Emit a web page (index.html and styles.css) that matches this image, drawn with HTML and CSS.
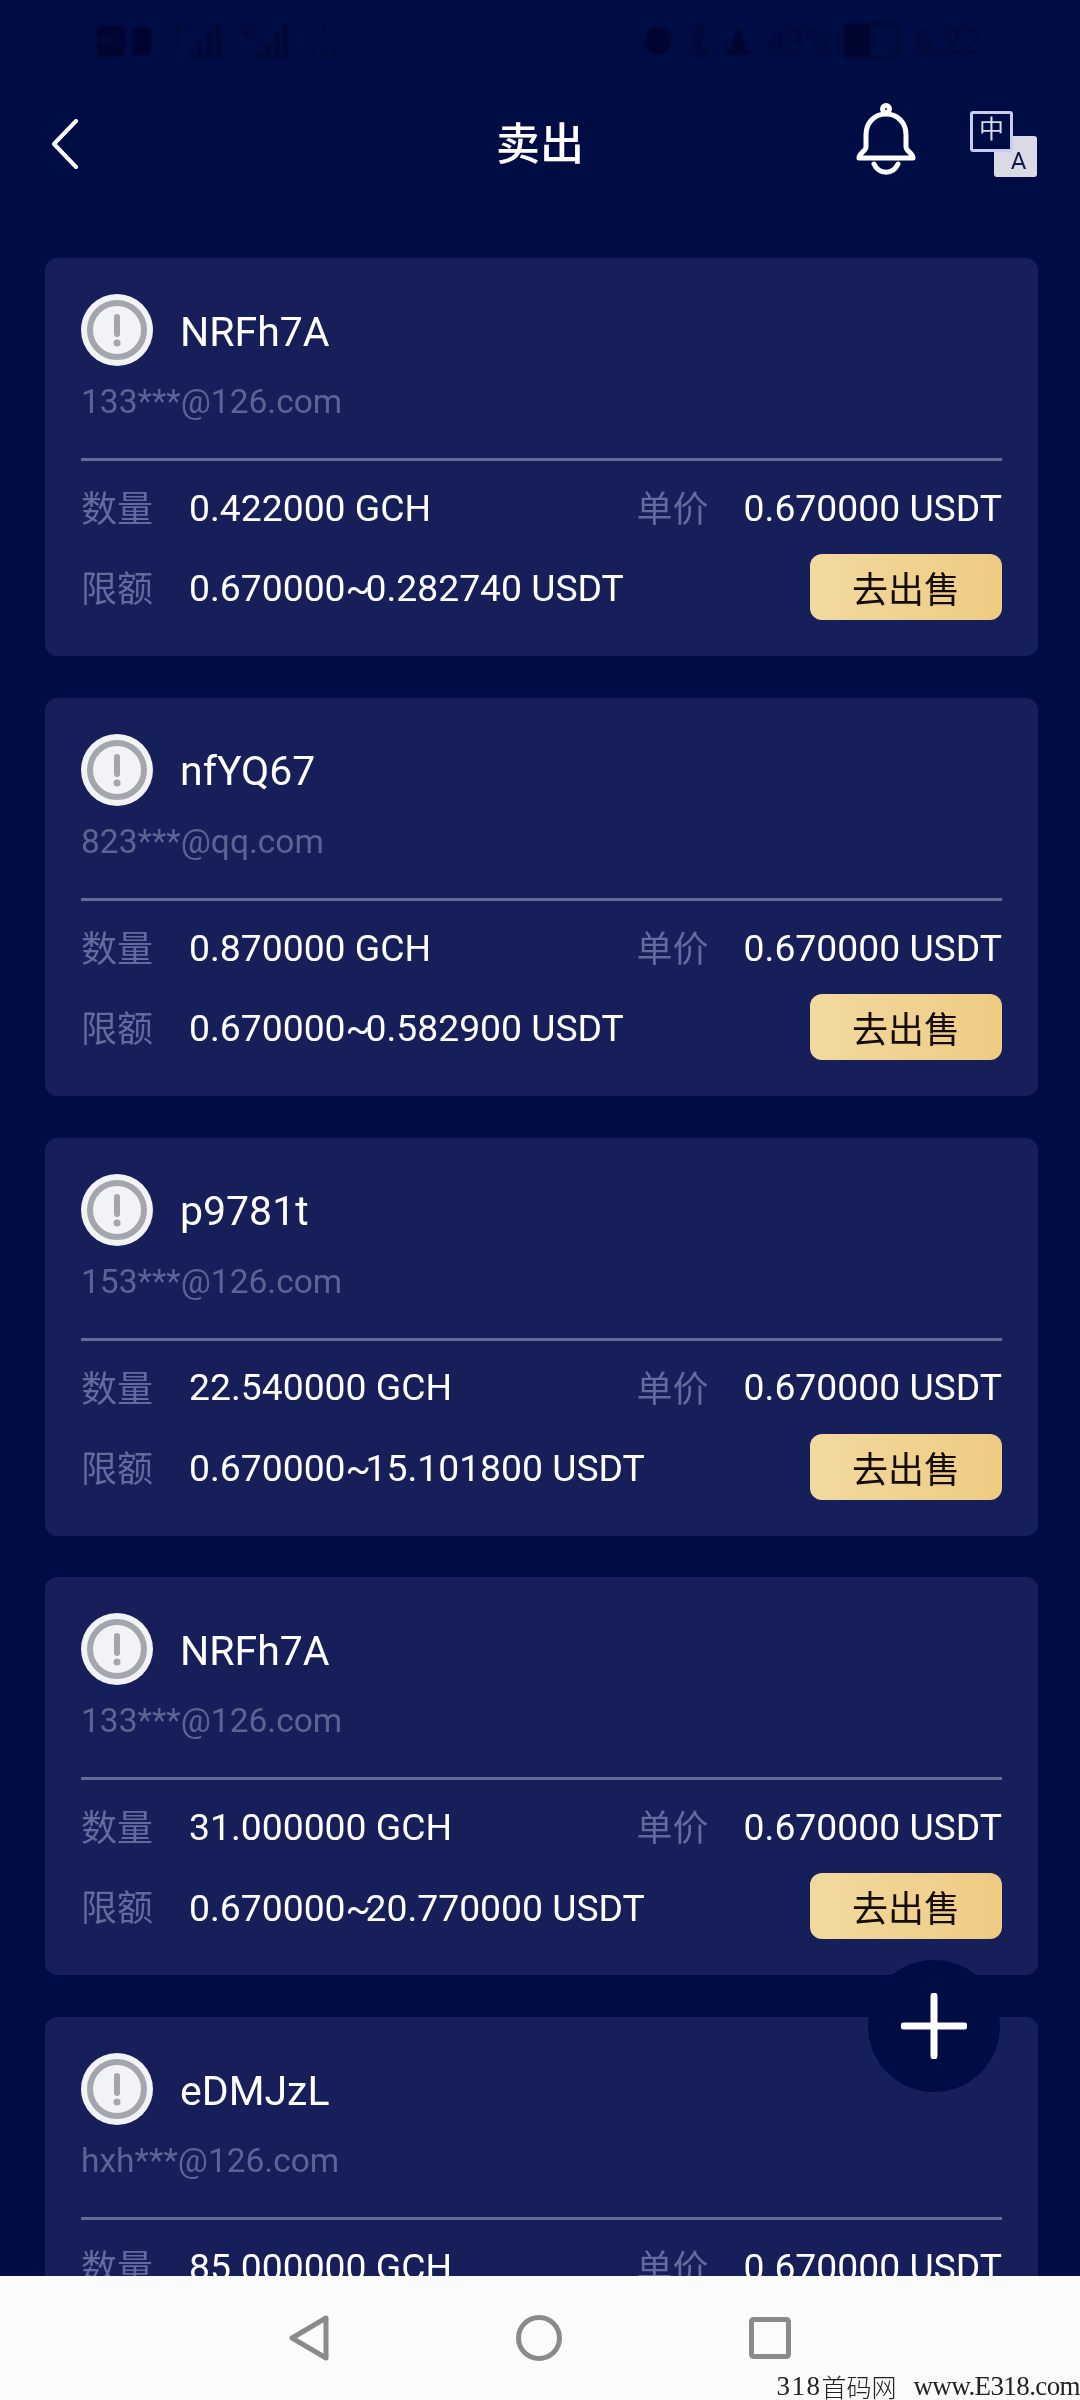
FILE: index.html
```html
<!doctype html>
<html lang="zh-CN">
  <head>
    <meta charset="UTF-8" />
    <meta name="viewport" content="width=device-width, initial-scale=1.0" />
    <title>卖出</title>
    <link rel="stylesheet" href="styles.css">
  </head>
  <body>
    <div class="status-bar">
      <div class="status-left">
        <span class="hd">HD</span>
        <span class="sim"></span>
        <svg class="sig" width="54" height="38" viewBox="0 0 54 38"><path d="M2 4h12M2 10h12M8 4v22M20 36v-6h4v6zM29 36V22h4v14zM38 36V12h4v24zM47 36V2h4v34z" fill="currentColor" stroke="currentColor" stroke-width="2"/></svg>
        <svg class="sig" width="52" height="38" viewBox="0 0 52 38"><path d="M2 6h10M2 12h10M7 6v14M18 36v-6h4v6zM27 36V22h4v14zM36 36V12h4v24zM45 36V2h4v34z" fill="currentColor" stroke="currentColor" stroke-width="2"/></svg>
        <svg class="wifi" width="36" height="44" viewBox="0 0 36 44"><path d="M18 2v14M4 32l6 8M16 30v12M24 32h8M24 38h8" fill="none" stroke="currentColor" stroke-width="3"/></svg>
      </div>
      <div class="status-right">
        <svg width="28" height="34" viewBox="0 0 28 34"><circle cx="14" cy="17" r="13.5" fill="#000530"/></svg>
        <svg width="22" height="40" viewBox="0 0 22 40"><path d="M3 11l16 18-8 9V2l8 9L3 29" fill="none" stroke="currentColor" stroke-width="3"/></svg>
        <svg width="28" height="34" viewBox="0 0 28 34"><path d="M14 2l9 24h4v5H1v-5h4z" fill="#000530"/></svg>
        <span class="pct">43%</span>
        <span class="batt"><span class="batt-fill"></span></span>
        <span class="clock">6:22</span>
      </div>
    </div>

    <header class="top-bar">
      <svg class="back" width="27" height="50" viewBox="0 0 27 50"><path d="M25 2L3 25l22 23" fill="none" stroke="#fff" stroke-width="4" stroke-linecap="round" stroke-linejoin="round"/></svg>
      <h1 class="title">卖出</h1>
      <svg class="bell" width="60" height="72" viewBox="0 0 60 72"><g fill="none" stroke="#fff" stroke-width="5" stroke-linejoin="round" stroke-linecap="round"><circle cx="30" cy="6" r="3.5"/><path d="M30 11C18 11 10 20 10 32v12c0 4-7 6-7 11h54c0-5-7-7-7-11V32c0-12-8-21-20-21z"/><path d="M18 61c5 11 19 11 24 0"/></g></svg>
      <div class="lang">
        <span class="lang-en">A</span>
        <span class="lang-zh">中</span>
      </div>
    </header>

    <main class="list">
      <section class="card">
        <div class="user">
          <svg class="avatar" viewBox="0 0 72 72"><circle cx="36" cy="36" r="36" fill="#f1f3f7"/><circle cx="36" cy="36" r="27" fill="none" stroke="#a3a6ad" stroke-width="6"/><rect x="33" y="20" width="6" height="23" rx="3" fill="#a3a6ad"/><circle cx="36" cy="49" r="3.5" fill="#a3a6ad"/></svg>
          <span class="name">NRFh7A</span>
        </div>
        <div class="email">133***@126.com</div>
        <div class="line"></div>
        <div class="row">
          <span class="label">数量</span><span class="value">0.422000 GCH</span>
          <span class="label price-label">单价</span><span class="value">0.670000 USDT</span>
        </div>
        <div class="row row-limit">
          <span class="label">限额</span><span class="value">0.670000<span class="tilde">~</span>0.282740 USDT</span>
          <button class="sell">去出售</button>
        </div>
      </section>

      <section class="card">
        <div class="user">
          <svg class="avatar" viewBox="0 0 72 72"><circle cx="36" cy="36" r="36" fill="#f1f3f7"/><circle cx="36" cy="36" r="27" fill="none" stroke="#a3a6ad" stroke-width="6"/><rect x="33" y="20" width="6" height="23" rx="3" fill="#a3a6ad"/><circle cx="36" cy="49" r="3.5" fill="#a3a6ad"/></svg>
          <span class="name">nfYQ67</span>
        </div>
        <div class="email">823***@qq.com</div>
        <div class="line"></div>
        <div class="row">
          <span class="label">数量</span><span class="value">0.870000 GCH</span>
          <span class="label price-label">单价</span><span class="value">0.670000 USDT</span>
        </div>
        <div class="row row-limit">
          <span class="label">限额</span><span class="value">0.670000<span class="tilde">~</span>0.582900 USDT</span>
          <button class="sell">去出售</button>
        </div>
      </section>

      <section class="card">
        <div class="user">
          <svg class="avatar" viewBox="0 0 72 72"><circle cx="36" cy="36" r="36" fill="#f1f3f7"/><circle cx="36" cy="36" r="27" fill="none" stroke="#a3a6ad" stroke-width="6"/><rect x="33" y="20" width="6" height="23" rx="3" fill="#a3a6ad"/><circle cx="36" cy="49" r="3.5" fill="#a3a6ad"/></svg>
          <span class="name">p9781t</span>
        </div>
        <div class="email">153***@126.com</div>
        <div class="line"></div>
        <div class="row">
          <span class="label">数量</span><span class="value">22.540000 GCH</span>
          <span class="label price-label">单价</span><span class="value">0.670000 USDT</span>
        </div>
        <div class="row row-limit">
          <span class="label">限额</span><span class="value">0.670000<span class="tilde">~</span>15.101800 USDT</span>
          <button class="sell">去出售</button>
        </div>
      </section>

      <section class="card">
        <div class="user">
          <svg class="avatar" viewBox="0 0 72 72"><circle cx="36" cy="36" r="36" fill="#f1f3f7"/><circle cx="36" cy="36" r="27" fill="none" stroke="#a3a6ad" stroke-width="6"/><rect x="33" y="20" width="6" height="23" rx="3" fill="#a3a6ad"/><circle cx="36" cy="49" r="3.5" fill="#a3a6ad"/></svg>
          <span class="name">NRFh7A</span>
        </div>
        <div class="email">133***@126.com</div>
        <div class="line"></div>
        <div class="row">
          <span class="label">数量</span><span class="value">31.000000 GCH</span>
          <span class="label price-label">单价</span><span class="value">0.670000 USDT</span>
        </div>
        <div class="row row-limit">
          <span class="label">限额</span><span class="value">0.670000<span class="tilde">~</span>20.770000 USDT</span>
          <button class="sell">去出售</button>
        </div>
      </section>

      <section class="card">
        <div class="user">
          <svg class="avatar" viewBox="0 0 72 72"><circle cx="36" cy="36" r="36" fill="#f1f3f7"/><circle cx="36" cy="36" r="27" fill="none" stroke="#a3a6ad" stroke-width="6"/><rect x="33" y="20" width="6" height="23" rx="3" fill="#a3a6ad"/><circle cx="36" cy="49" r="3.5" fill="#a3a6ad"/></svg>
          <span class="name">eDMJzL</span>
        </div>
        <div class="email">hxh***@126.com</div>
        <div class="line"></div>
        <div class="row">
          <span class="label">数量</span><span class="value">85.000000 GCH</span>
          <span class="label price-label">单价</span><span class="value">0.670000 USDT</span>
        </div>
      </section>

      <button class="fab">
        <svg width="66" height="66" viewBox="0 0 66 66"><path d="M33 3v60M3 33h60" stroke="#fff" stroke-width="7" stroke-linecap="round"/></svg>
      </button>
    </main>

    <nav class="nav-bar">
      <svg width="40" height="46" viewBox="0 0 40 46"><path d="M37 3v40L3 23z" fill="none" stroke="#8a8a8a" stroke-width="5" stroke-linejoin="round"/></svg>
      <svg width="46" height="46" viewBox="0 0 46 46"><circle cx="23" cy="23" r="20.5" fill="none" stroke="#8a8a8a" stroke-width="5"/></svg>
      <svg width="42" height="42" viewBox="0 0 42 42"><rect x="2.5" y="2.5" width="37" height="37" rx="2" fill="none" stroke="#8a8a8a" stroke-width="5"/></svg>
      <span class="watermark"><span class="wm-num">318</span><span class="wm-cjk">首码网</span><span class="wm-url">www.E318.com</span></span>
    </nav>
  </body>
</html>
```

FILE: styles.css
```css
html, body {
  margin: 0;
  height: 100%;
}
body {
  width: 1080px;
  height: 2400px;
  display: flex;
  flex-direction: column;
  overflow: hidden;
  background-color: #000d44;
  font-family: Roboto, "Noto Sans CJK SC", sans-serif;
  color: #fff;
}
.status-bar {
  height: 66px;
  flex: none;
  display: flex;
  justify-content: space-between;
  align-items: center;
  padding: 16px 98px 0 97px;
  box-sizing: border-box;
  color: #000836;
  filter: blur(1px);
}
.status-left, .status-right {
  display: flex;
  align-items: center;
  gap: 15px;
}
.status-left {
  gap: 8px;
}
.hd {
  width: 28px;
  height: 31px;
  background: #000530;
  color: #000f48;
  font-size: 15px;
  line-height: 31px;
  text-align: center;
}
.sim {
  width: 18px;
  height: 28px;
  margin-right: 10px;
  background: #000530;
  border-radius: 2px;
}
.sig + .sig {
  margin-left: 8px;
}
.wifi {
  margin-left: 8px;
}
.pct, .clock {
  font-size: 33px;
}
.clock {
  letter-spacing: 1px;
}
.batt {
  width: 50px;
  height: 30px;
  border: 3px solid #000836;
  border-radius: 7px;
  display: flex;
}
.batt-fill {
  width: 24px;
  background: #000530;
}
.top-bar {
  height: 192px;
  flex: none;
  box-sizing: border-box;
  position: relative;
  display: flex;
  justify-content: center;
  align-items: center;
  padding-bottom: 34px;
}
.title {
  margin: 0;
  font-size: 44px;
  font-weight: 500;
  line-height: 48px;
}
.back {
  position: absolute;
  left: 51px;
  top: 53px;
}
.bell {
  position: absolute;
  left: 856px;
  top: 37px;
}
.lang {
  position: absolute;
  left: 970px;
  top: 45px;
  width: 67px;
  height: 66px;
}
.lang-zh {
  position: absolute;
  left: 0;
  top: 0;
  width: 43px;
  height: 41px;
  box-sizing: border-box;
  border: 3.5px solid #c9cdec;
  border-radius: 3px;
  background-color: #000d44;
  font-size: 25px;
  line-height: 32px;
  text-align: center;
  color: #d9dbe8;
}
.lang-en {
  position: absolute;
  right: 0;
  bottom: 0;
  width: 43px;
  height: 41px;
  padding: 8px 0 0 6px;
  box-sizing: border-box;
  background: #d9dae6;
  border-radius: 3px;
  font-size: 24px;
  line-height: 34px;
  text-align: center;
  color: #111a42;
}
.list {
  flex: 1;
  position: relative;
  overflow: hidden;
  padding: 0 42px 0 45px;
  display: flex;
  flex-direction: column;
  gap: 41.8px;
}
.card {
  flex: none;
  height: 398px;
  box-sizing: border-box;
  padding: 36px 36px;
  background-color: #161f5a;
  border-radius: 12px;
}
.user {
  display: flex;
  align-items: center;
  gap: 27px;
  height: 72px;
}
.avatar {
  width: 72px;
  height: 72px;
}
.name {
  margin-top: 3px;
  font-size: 41px;
}
.email {
  margin-top: 12px;
  font-size: 33.5px;
  line-height: 48px;
  color: #5b6492;
}
.line {
  margin-top: 32px;
  height: 3px;
  background-color: #666b96;
}
.row {
  display: flex;
  align-items: center;
  height: 47px;
  margin-top: 24px;
}
.row-limit {
  height: 66px;
  margin-top: 22px;
}
.row-limit .value {
  margin-top: 4px;
}
.label {
  width: 108px;
  flex: none;
  margin-bottom: 5px;
  font-family: "Noto Sans CJK SC", sans-serif;
  font-size: 36px;
  line-height: 1;
  color: #626b9c;
}
.row-limit .label {
  margin-top: 3px;
}
.value {
  font-size: 37.3px;
  line-height: 1;
  white-space: nowrap;
}
.tilde {
  letter-spacing: -5.5px;
}
.price-label {
  margin-left: auto;
  width: 107px;
}
.sell {
  margin-left: auto;
  width: 192px;
  height: 66px;
  border: none;
  border-radius: 12px;
  background: linear-gradient(90deg, #f2d99f, #eecb82);
  font-family: "Noto Sans CJK SC", sans-serif;
  font-size: 36px;
  color: #140c05;
}
.fab {
  position: absolute;
  left: 868px;
  top: 1702px;
  width: 132px;
  height: 132px;
  padding: 0;
  border: none;
  border-radius: 50%;
  background-color: #000d44;
  display: flex;
  align-items: center;
  justify-content: center;
}
.nav-bar {
  height: 124px;
  flex: none;
  position: relative;
  box-sizing: border-box;
  background-color: #fbfbfb;
  display: flex;
  align-items: center;
  justify-content: center;
  gap: 187px;
}
.watermark {
  position: absolute;
  right: 0;
  bottom: 0;
  display: flex;
  align-items: center;
  font-family: "Liberation Serif", "Noto Sans CJK SC", serif;
  font-size: 27px;
  line-height: 28px;
  white-space: nowrap;
  color: #222;
}
.wm-num {
  letter-spacing: 1.5px;
}
.wm-cjk {
  font-family: "Noto Sans CJK SC", sans-serif;
  font-size: 25px;
  font-weight: 300;
  margin-right: 17px;
}
.wm-url {
  letter-spacing: -0.6px;
}
```
